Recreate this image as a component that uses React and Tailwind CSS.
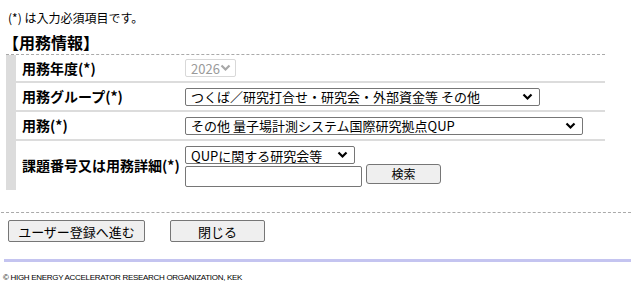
import { useState } from 'react';

const FONT = "font-['Noto_Sans_CJK_JP','Liberation_Sans',sans-serif]";

function Select({ value, className = '', disabled }) {
  return (
    <div
      className={`flex items-center justify-between border ${
        disabled ? 'border-[#d8d8d8] text-[#9a9a9a]' : 'border-[#767676] text-black'
      } rounded-[2px] bg-white pl-[5px] pr-[6px] text-[13px] leading-none ${className}`}
    >
      <span className="whitespace-nowrap">{value}</span>
      <svg width="11" height="8" viewBox="0 0 11 8" className="shrink-0">
        <path
          d="M1.5 1.5 L5.5 5.5 L9.5 1.5"
          fill="none"
          stroke={disabled ? '#a8a8a8' : '#000'}
          strokeWidth="2.2"
        />
      </svg>
    </div>
  );
}

function Row({ label, children, className = '' }) {
  return (
    <div className={`flex border-b-2 border-[#dcdcdc] ${className}`}>
      <div className="w-[169px] shrink-0 pl-[6px] flex items-center text-[14px] font-bold">
        {label}
      </div>
      <div className="flex-1 flex flex-col justify-center">{children}</div>
    </div>
  );
}

export default function App() {
  const [detail, setDetail] = useState('');

  return (
    <div className={`w-[631px] h-[291px] bg-white text-black overflow-hidden ${FONT}`}>
      <p className="pl-[8px] pt-[11px] text-[12px] leading-[14px]">(*) は入力必須項目です。</p>
      <h2 className="pl-[3px] mt-[7px] text-[16px] font-bold leading-[20px]">【用務情報】</h2>

      <div className="mt-[2px] ml-[6px] w-[599px] border-t border-dashed border-[#aaa] flex">
        <div className="w-[10px] bg-[#dcdcdc]" />
        <div className="flex-1">
          <Row label="用務年度(*)" className="h-[28px]">
            <Select value="2026" disabled className="w-[51px] h-[18px]" />
          </Row>
          <Row label="用務グループ(*)" className="h-[29px]">
            <Select value="つくば／研究打合せ・研究会・外部資金等 その他" className="w-[355px] h-[18px]" />
          </Row>
          <Row label="用務(*)" className="h-[29px]">
            <Select value="その他 量子場計測システム国際研究拠点QUP" className="w-[398px] h-[18px]" />
          </Row>
          <div className="flex h-[49px]">
            <div className="w-[169px] shrink-0 pl-[6px] flex items-center text-[14px] font-bold">
              課題番号又は用務詳細(*)
            </div>
            <div className="flex flex-col pt-[5px]">
              <Select value="QUPに関する研究会等" className="w-[170px] h-[18px]" />
              <div className="flex items-start mt-[2px]">
                <input
                  value={detail}
                  onChange={(e) => setDetail(e.target.value)}
                  className="w-[177px] h-[21px] border border-[#767676] rounded-[2px] outline-none px-1 text-[13px]"
                />
                <button className="ml-[4px] -mt-[2px] w-[75px] h-[20px] border border-[#767676] rounded-[3px] bg-[#efefef] text-[12px] leading-none">
                  検索
                </button>
              </div>
            </div>
          </div>
        </div>
      </div>

      <div className="mt-[22px] ml-[1px] border-t border-dashed border-[#aaa]" />

      <div className="flex gap-[25px] pl-[8px] mt-[7px]">
        <button className="w-[137px] h-[22px] border border-[#767676] rounded-[2px] bg-[#efefef] text-[13px] leading-none">
          ユーザー登録へ進む
        </button>
        <button className="w-[95px] h-[22px] border border-[#767676] rounded-[2px] bg-[#efefef] text-[13px] leading-none">
          閉じる
        </button>
      </div>

      <div className="mt-[17px] ml-[4px] h-[3px] bg-[#c4c4f0]" />

      <p className="pl-[3px] mt-[11px] text-[8px] leading-[10px] tracking-[-0.3px] font-['Liberation_Sans',sans-serif]">
        © HIGH ENERGY ACCELERATOR RESEARCH ORGANIZATION, KEK
      </p>
    </div>
  );
}
